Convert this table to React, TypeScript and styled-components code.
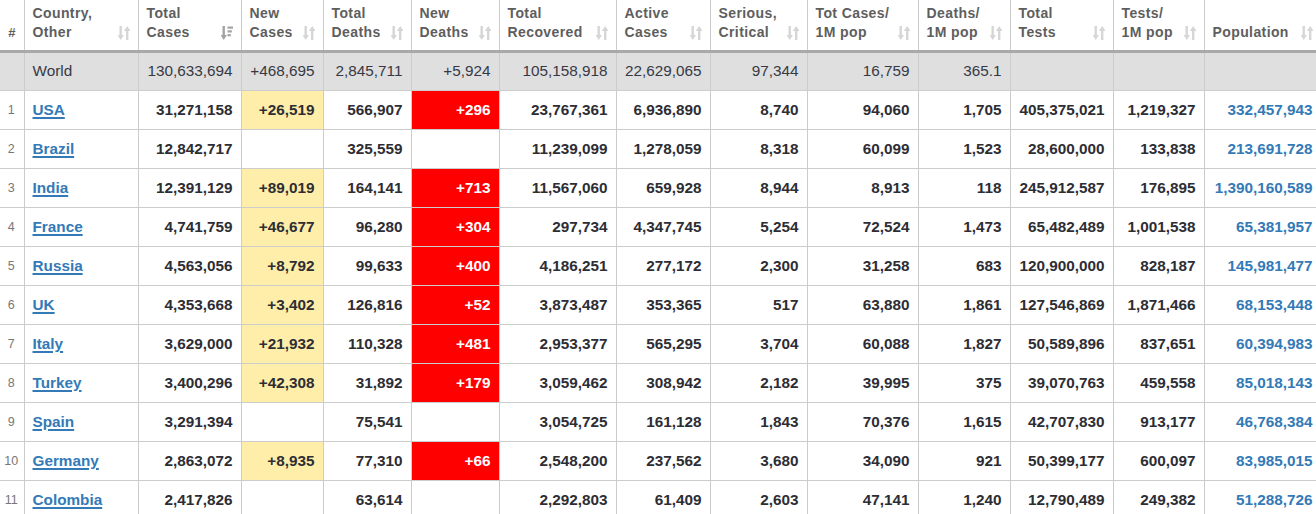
import styled, { createGlobalStyle } from "styled-components";

type Row = {
  rank: number;
  country: string;
  totalCases: string;
  newCases: string;
  totalDeaths: string;
  newDeaths: string;
  recovered: string;
  active: string;
  serious: string;
  casesPerM: string;
  deathsPerM: string;
  tests: string;
  testsPerM: string;
  population: string;
};

const COLUMNS: { label: string[]; width: number; sorted?: boolean }[] = [
  { label: ["#"], width: 24 },
  { label: ["Country,", "Other"], width: 114 },
  { label: ["Total", "Cases"], width: 103, sorted: true },
  { label: ["New", "Cases"], width: 82 },
  { label: ["Total", "Deaths"], width: 88 },
  { label: ["New", "Deaths"], width: 88 },
  { label: ["Total", "Recovered"], width: 117 },
  { label: ["Active", "Cases"], width: 94 },
  { label: ["Serious,", "Critical"], width: 97 },
  { label: ["Tot Cases/", "1M pop"], width: 111 },
  { label: ["Deaths/", "1M pop"], width: 92 },
  { label: ["Total", "Tests"], width: 103 },
  { label: ["Tests/", "1M pop"], width: 91 },
  { label: ["Population"], width: 117 },
];

const TABLE_WIDTH = COLUMNS.reduce((sum, col) => sum + col.width, 0);

const WORLD = [
  "130,633,694",
  "+468,695",
  "2,845,711",
  "+5,924",
  "105,158,918",
  "22,629,065",
  "97,344",
  "16,759",
  "365.1",
  "",
  "",
  "",
];

const ROWS: Row[] = [
  { rank: 1, country: "USA", totalCases: "31,271,158", newCases: "+26,519", totalDeaths: "566,907", newDeaths: "+296", recovered: "23,767,361", active: "6,936,890", serious: "8,740", casesPerM: "94,060", deathsPerM: "1,705", tests: "405,375,021", testsPerM: "1,219,327", population: "332,457,943" },
  { rank: 2, country: "Brazil", totalCases: "12,842,717", newCases: "", totalDeaths: "325,559", newDeaths: "", recovered: "11,239,099", active: "1,278,059", serious: "8,318", casesPerM: "60,099", deathsPerM: "1,523", tests: "28,600,000", testsPerM: "133,838", population: "213,691,728" },
  { rank: 3, country: "India", totalCases: "12,391,129", newCases: "+89,019", totalDeaths: "164,141", newDeaths: "+713", recovered: "11,567,060", active: "659,928", serious: "8,944", casesPerM: "8,913", deathsPerM: "118", tests: "245,912,587", testsPerM: "176,895", population: "1,390,160,589" },
  { rank: 4, country: "France", totalCases: "4,741,759", newCases: "+46,677", totalDeaths: "96,280", newDeaths: "+304", recovered: "297,734", active: "4,347,745", serious: "5,254", casesPerM: "72,524", deathsPerM: "1,473", tests: "65,482,489", testsPerM: "1,001,538", population: "65,381,957" },
  { rank: 5, country: "Russia", totalCases: "4,563,056", newCases: "+8,792", totalDeaths: "99,633", newDeaths: "+400", recovered: "4,186,251", active: "277,172", serious: "2,300", casesPerM: "31,258", deathsPerM: "683", tests: "120,900,000", testsPerM: "828,187", population: "145,981,477" },
  { rank: 6, country: "UK", totalCases: "4,353,668", newCases: "+3,402", totalDeaths: "126,816", newDeaths: "+52", recovered: "3,873,487", active: "353,365", serious: "517", casesPerM: "63,880", deathsPerM: "1,861", tests: "127,546,869", testsPerM: "1,871,466", population: "68,153,448" },
  { rank: 7, country: "Italy", totalCases: "3,629,000", newCases: "+21,932", totalDeaths: "110,328", newDeaths: "+481", recovered: "2,953,377", active: "565,295", serious: "3,704", casesPerM: "60,088", deathsPerM: "1,827", tests: "50,589,896", testsPerM: "837,651", population: "60,394,983" },
  { rank: 8, country: "Turkey", totalCases: "3,400,296", newCases: "+42,308", totalDeaths: "31,892", newDeaths: "+179", recovered: "3,059,462", active: "308,942", serious: "2,182", casesPerM: "39,995", deathsPerM: "375", tests: "39,070,763", testsPerM: "459,558", population: "85,018,143" },
  { rank: 9, country: "Spain", totalCases: "3,291,394", newCases: "", totalDeaths: "75,541", newDeaths: "", recovered: "3,054,725", active: "161,128", serious: "1,843", casesPerM: "70,376", deathsPerM: "1,615", tests: "42,707,830", testsPerM: "913,177", population: "46,768,384" },
  { rank: 10, country: "Germany", totalCases: "2,863,072", newCases: "+8,935", totalDeaths: "77,310", newDeaths: "+66", recovered: "2,548,200", active: "237,562", serious: "3,680", casesPerM: "34,090", deathsPerM: "921", tests: "50,399,177", testsPerM: "600,097", population: "83,985,015" },
  { rank: 11, country: "Colombia", totalCases: "2,417,826", newCases: "", totalDeaths: "63,614", newDeaths: "", recovered: "2,292,803", active: "61,409", serious: "2,603", casesPerM: "47,141", deathsPerM: "1,240", tests: "12,790,489", testsPerM: "249,382", population: "51,288,726" },
];

const SortIcon = ({ sorted }: { sorted?: boolean }) =>
  sorted ? (
    <svg width="12" height="14" viewBox="0 0 12 14">
      <g fill="#a3a3a3">
        <rect x="1.5" y="0" width="2.4" height="10" />
        <polygon points="-0.5,9 6,9 2.7,14" />
        <rect x="6.5" y="0.5" width="5.5" height="2.2" />
        <rect x="6.5" y="4.3" width="4.4" height="2.2" />
        <rect x="6.5" y="8.1" width="3.3" height="2.2" />
      </g>
    </svg>
  ) : (
    <svg width="12" height="14" viewBox="0 0 12 14">
      <g fill="#d6d6d6">
        <rect x="1.5" y="0" width="2.4" height="10" />
        <polygon points="-0.5,9 6,9 2.7,14" />
        <rect x="8" y="4" width="2.4" height="10" />
        <polygon points="5.9,5 12.5,5 9.2,0" />
      </g>
    </svg>
  );

export default function App() {
  return (
    <>
      <GlobalStyle />
      <Table style={{ width: TABLE_WIDTH }}>
        <colgroup>
          {COLUMNS.map((col, index) => (
            <col key={index} style={{ width: col.width }} />
          ))}
        </colgroup>
        <thead>
          <tr>
            {COLUMNS.map((col, index) => (
              <HeadCell key={index} $center={index === 0}>
                {index === 0 ? (
                  "#"
                ) : (
                  <HeadInner>
                    <span>
                      {col.label.map((line, i) => (
                        <HeadLine key={i}>{line}</HeadLine>
                      ))}
                    </span>
                    <SortIcon sorted={col.sorted} />
                  </HeadInner>
                )}
              </HeadCell>
            ))}
          </tr>
        </thead>
        <tbody>
          <WorldRow>
            <td></td>
            <TextCell>World</TextCell>
            {WORLD.map((value, index) => (
              <NumCell key={index}>{value}</NumCell>
            ))}
          </WorldRow>
          {ROWS.map((row) => (
            <DataRow key={row.rank}>
              <RankCell>{row.rank}</RankCell>
              <TextCell>
                <CountryLink href="#">{row.country}</CountryLink>
              </TextCell>
              <NumCell>{row.totalCases}</NumCell>
              <NumCell $tone={row.newCases ? "yellow" : undefined}>
                {row.newCases}
              </NumCell>
              <NumCell>{row.totalDeaths}</NumCell>
              <NumCell $tone={row.newDeaths ? "red" : undefined}>
                {row.newDeaths}
              </NumCell>
              <NumCell>{row.recovered}</NumCell>
              <NumCell>{row.active}</NumCell>
              <NumCell>{row.serious}</NumCell>
              <NumCell>{row.casesPerM}</NumCell>
              <NumCell>{row.deathsPerM}</NumCell>
              <NumCell>{row.tests}</NumCell>
              <NumCell>{row.testsPerM}</NumCell>
              <NumCell $link>{row.population}</NumCell>
            </DataRow>
          ))}
        </tbody>
      </Table>
    </>
  );
}

const GlobalStyle = createGlobalStyle`
  html, body {
    margin: 0;
    padding: 0;
    background: #ffffff;
    overflow: hidden;
  }
  body {
    font-family: "Liberation Sans", Arial, sans-serif;
    color: #363945;
  }
`;

const Table = styled.table`
  table-layout: fixed;
  border-collapse: collapse;
  font-family: "Liberation Sans", Arial, sans-serif;

  td {
    padding-top: 0;
    padding-bottom: 0;
  }
`;

const HeadCell = styled.th<{ $center?: boolean }>`
  height: 51px;
  padding: 1px 8px 8px 8px;
  border-right: 1px solid #cccccc;
  border-bottom: 3px solid #a9a9a9;
  vertical-align: bottom;
  text-align: ${(props) => (props.$center ? "center" : "left")};
  font-size: 14px;
  font-weight: 700;
  letter-spacing: 0.4px;
  line-height: 19px;
  color: #5e5e5e;
  box-sizing: border-box;

  &:first-child {
    padding: 0 0 8px 0;
    font-size: 13px;
    letter-spacing: 0;
  }
`;

const HeadInner = styled.div`
  display: flex;
  justify-content: space-between;
  align-items: flex-end;

  svg {
    flex-shrink: 0;
    margin-bottom: 2px;
  }
`;

const HeadLine = styled.div`
  white-space: nowrap;
`;

const WorldRow = styled.tr`
  background: #dfdfdf;

  td {
    height: 37px;
    border-right: 1px solid #cccccc;
    border-bottom: 1px solid #cccccc;
    font-size: 15.3px;
    font-weight: 400;
    color: #363945;
  }
`;

const DataRow = styled.tr`
  td {
    height: 38.1px;
    border-right: 1px solid #cccccc;
    border-bottom: 1px solid #cccccc;
  }
`;

const RankCell = styled.td`
  text-align: center;
  font-size: 12.5px;
  color: #777777;
  padding-right: 2px;
`;

const TextCell = styled.td`
  padding: 0 8px;
  text-align: left;
  font-size: 15.3px;
  font-weight: 700;
  white-space: nowrap;
`;

const CountryLink = styled.a`
  color: #337ab7;
  text-decoration: underline;
  text-decoration-thickness: 2px;
  text-underline-offset: 2px;
`;

const NumCell = styled.td<{ $tone?: "yellow" | "red"; $link?: boolean }>`
  padding: 0 8px;
  text-align: right;
  white-space: nowrap;
  font-size: 15.3px;
  font-weight: 700;
  color: ${(props) =>
    props.$tone === "red" ? "#ffffff" : props.$link ? "#337ab7" : "#2d2d34"};
  background: ${(props) =>
    props.$tone === "yellow"
      ? "#ffeeaa"
      : props.$tone === "red"
      ? "#ff0000"
      : "transparent"};
`;
